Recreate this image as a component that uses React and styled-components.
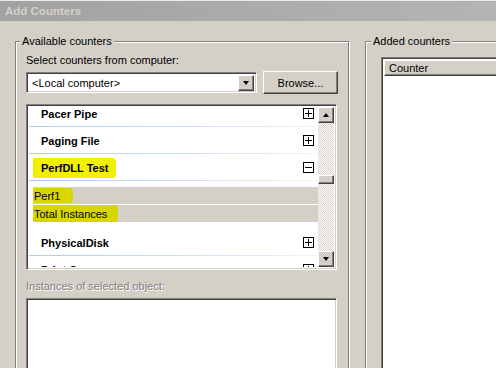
import React from 'react';
import styled, { createGlobalStyle } from 'styled-components';

const GlobalStyle = createGlobalStyle`
  html, body { margin: 0; padding: 0; }
  body {
    background: #d4d0c8;
    font-family: "Liberation Sans", Arial, sans-serif;
    font-size: 11px;
    color: #000;
  }
`;

const raised = `
  border: 1px solid;
  border-color: #fff #404040 #404040 #fff;
  box-shadow: inset -1px -1px 0 #808080, inset 1px 1px 0 #d4d0c8;
  background: #d4d0c8;
  box-sizing: border-box;
`;

const sunken = `
  border: 1px solid;
  border-color: #808080 #fff #fff #808080;
  box-shadow: inset 1px 1px 0 #404040, inset -1px -1px 0 #d4d0c8;
  box-sizing: border-box;
`;

const Window = styled.div`
  width: 496px;
  height: 368px;
  overflow: hidden;
  background: #d4d0c8;
  border-top: 1px solid #eeeae2;
  box-sizing: border-box;
`;

const TitleBar = styled.div`
  height: 20px;
  display: flex;
  align-items: center;
  padding-left: 5px;
  background: linear-gradient(to right, #a2a2a2, #b4b4b4);
  color: #d4d0c8;
  font-weight: bold;
  font-size: 11.5px;
`;

const Body = styled.div`
  display: flex;
  align-items: flex-start;
  gap: 16px;
  padding: 14px 0 0 15px;
`;

const Group = styled.fieldset`
  margin: 0;
  padding: 0 0 0 ${p => p.$pad}px;
  min-width: 0;
  width: ${p => p.$w}px;
  height: 380px;
  flex-shrink: 0;
  box-sizing: border-box;
  border: 1px solid #808080;
  box-shadow: inset 1px 1px 0 #fff, 1px 1px 0 #fff;
`;

const Legend = styled.legend`
  padding: 0 2px;
  margin-left: ${p => p.$shift}px;
  line-height: 13px;
  background: #d4d0c8;
`;

const Label = styled.div`
  margin-top: ${p => p.$top}px;
  line-height: 13px;
  color: ${p => (p.$disabled ? '#808080' : '#000')};
  text-shadow: ${p => (p.$disabled ? '1px 1px 0 #fff' : 'none')};
`;

const ComboRow = styled.div`
  display: flex;
  align-items: center;
  height: 23px;
  margin-top: 4px;
  gap: 6px;
`;

const Combo = styled.div`
  ${sunken}
  width: 231px;
  height: 21px;
  background: #fff;
  display: flex;
  align-items: center;
  padding: 2px 2px 2px 5px;
`;

const ComboText = styled.span`
  flex: 1;
`;

const ArrowBtn = styled.div`
  ${raised}
  width: 16px;
  height: 16px;
  display: flex;
  align-items: center;
  justify-content: center;
  flex-shrink: 0;
`;

const Tri = styled.span`
  width: 0;
  height: 0;
  border-left: 3.5px solid transparent;
  border-right: 3.5px solid transparent;
  ${p => (p.$up ? 'border-bottom: 4px solid #000;' : 'border-top: 4px solid #000;')}
`;

const Button = styled.div`
  ${raised}
  width: 75px;
  height: 23px;
  display: flex;
  align-items: center;
  justify-content: center;
`;

const ListBox = styled.div`
  ${sunken}
  width: 311px;
  height: ${p => p.$h}px;
  margin-top: ${p => p.$top}px;
  background: #fff;
  display: flex;
  padding: 2px;
`;

const Items = styled.div`
  flex: 1;
  overflow: hidden;
`;

const ItemsInner = styled.div`
  margin-top: -7px;
`;

const Row = styled.div`
  height: 27px;
  box-sizing: border-box;
  padding: 1px 4px 1px 12px;
  display: flex;
  align-items: center;
  font-weight: bold;
  background: linear-gradient(to right, #b4cce9, #d3e2f4 60%, #eef4fb) bottom / 100% 1px no-repeat;
`;

const RowName = styled.span`
  flex: 1;
`;

const SubGroup = styled.div`
  padding: 6px 0 7px 4px;
  display: flex;
  flex-direction: column;
  gap: 1px;
`;

const SubRow = styled.div`
  height: 17px;
  background: #d4d0c8;
  display: flex;
  align-items: center;
  padding-left: 1px;
`;

const Mark = styled.span`
  display: inline-flex;
  align-items: center;
  background: ${p => p.$tone};
  margin-left: ${p => -p.$l}px;
  padding: 0 ${p => p.$r}px 0 ${p => p.$l}px;
  height: ${p => p.$h}px;
  border-radius: 2px 4px 3px 2px;
`;

const ScrollBar = styled.div`
  width: 16px;
  flex-shrink: 0;
  display: flex;
  flex-direction: column;
  background: repeating-conic-gradient(#d4d0c8 0 25%, #fff 0 50%) 0 0 / 2px 2px;
`;

const Thumb = styled.div`
  ${raised}
  height: 9px;
  margin-top: 52px;
`;

const Spacer = styled.div`
  flex: 1;
`;

const ListView = styled.div`
  ${sunken}
  margin-top: 9px;
  width: 200px;
  height: 340px;
  background: #fff;
  padding: 2px;
`;

const Header = styled.div`
  ${raised}
  height: 16px;
  width: 130px;
  display: flex;
  align-items: center;
  padding-left: 4px;
`;

function ToggleBox({ open }) {
  return (
    <svg width="11" height="11" viewBox="0 0 11 11" style={{ flexShrink: 0 }}>
      <rect x="0.5" y="0.5" width="10" height="10" fill="#fff" stroke="#000" />
      <line x1="2" y1="5.5" x2="9" y2="5.5" stroke="#000" />
      {!open && <line x1="5.5" y1="2" x2="5.5" y2="9" stroke="#000" />}
    </svg>
  );
}

const objects = [
  { name: 'Pacer Pipe' },
  { name: 'Paging File' },
  { name: 'PerfDLL Test', open: true, mark: true, subs: ['Perf1', 'Total Instances'] },
  { name: 'PhysicalDisk' },
  { name: 'Print Queue' },
];

export default function App() {
  return (
    <Window>
      <GlobalStyle />
      <TitleBar>Add Counters</TitleBar>
      <Body>
        <Group $w={334} $pad={10}>
          <Legend $shift={-6}>Available counters</Legend>
          <Label $top={6}>Select counters from computer:</Label>
          <ComboRow>
            <Combo>
              <ComboText>&lt;Local computer&gt;</ComboText>
              <ArrowBtn><Tri /></ArrowBtn>
            </Combo>
            <Button>Browse...</Button>
          </ComboRow>
          <ListBox $h={166} $top={10}>
            <Items>
              <ItemsInner>
                {objects.map(o => (
                  <React.Fragment key={o.name}>
                    <Row>
                      <RowName>
                        {o.mark ? (
                          <Mark $tone="#f2f000" $l={8} $r={8} $h={20}>{o.name}</Mark>
                        ) : o.name}
                      </RowName>
                      <ToggleBox open={o.open} />
                    </Row>
                    {o.subs && (
                      <SubGroup>
                        <SubRow>
                          <Mark $tone="#d8d600" $l={1} $r={13} $h={15}>Perf1</Mark>
                        </SubRow>
                        <SubRow>
                          <Mark $tone="#d8d600" $l={1} $r={11} $h={17}>Total Instances</Mark>
                        </SubRow>
                      </SubGroup>
                    )}
                  </React.Fragment>
                ))}
              </ItemsInner>
            </Items>
            <ScrollBar>
              <ArrowBtn><Tri $up /></ArrowBtn>
              <Thumb />
              <Spacer />
              <ArrowBtn><Tri /></ArrowBtn>
            </ScrollBar>
          </ListBox>
          <Label $top={10} $disabled>Instances of selected object:</Label>
          <ListBox $h={100} $top={5} />
        </Group>
        <Group $w={160} $pad={15}>
          <Legend $shift={-10}>Added counters</Legend>
          <ListView>
            <Header>Counter</Header>
          </ListView>
        </Group>
      </Body>
    </Window>
  );
}
